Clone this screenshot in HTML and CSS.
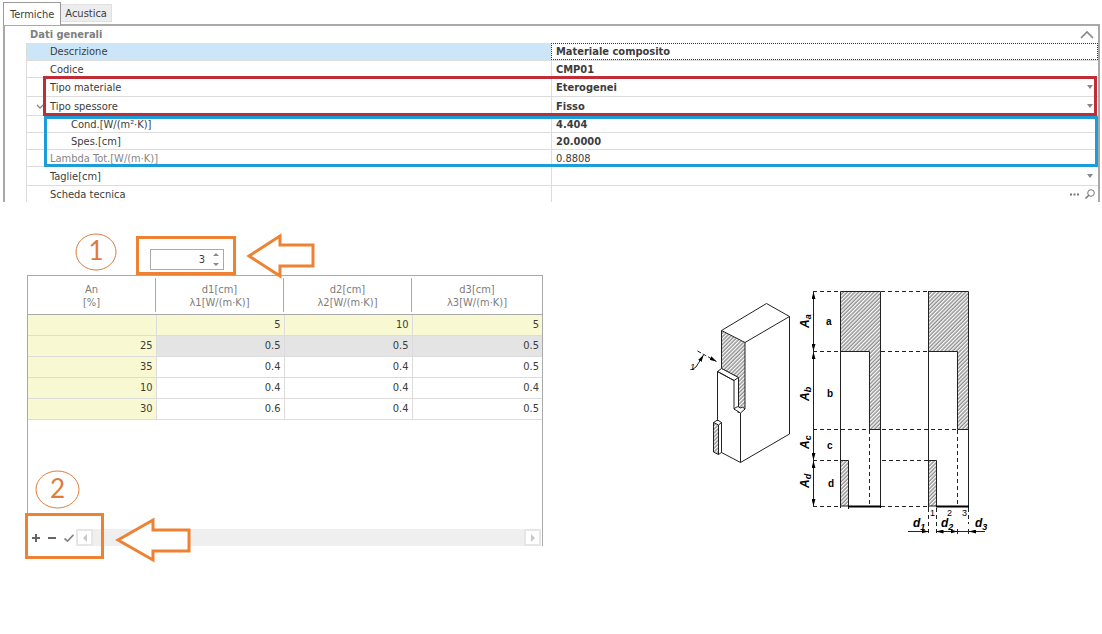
FILE: index.html
```html
<!DOCTYPE html>
<html lang="it">
<head>
<meta charset="utf-8">
<title>Materiale composito</title>
<link rel="stylesheet" href="styles.css">
</head>
<body>
<nav class="tabs" role="tablist">
  <button class="tab tab-active" type="button" role="tab" aria-selected="true">Termiche</button>
  <button class="tab" type="button" role="tab" aria-selected="false">Acustica</button>
</nav>
<form class="panel">
  <div class="group-head">
    <h2 class="group-title">Dati generali</h2>
    <button class="icon-btn collapse" type="button" aria-label="Comprimi"><svg width="14" height="9" viewBox="0 0 14 9"><path d="M1 8 7 2l6 6" fill="none" stroke="#888" stroke-width="1.6"/></svg></button>
  </div>
  <div class="props">
    <div class="row row-selected"><label class="name" for="descr">Descrizione</label><div class="value"><input class="field strong" id="descr" value="Materiale composito"></div></div>
    <div class="row"><label class="name" for="codice">Codice</label><div class="value"><input class="field strong" id="codice" value="CMP01"></div></div>
    <div class="marked marked-red">
      <div class="row row-tall"><label class="name" for="tipom">Tipo materiale</label><div class="value"><select class="field strong" id="tipom"><option>Eterogenei</option></select><svg class="caret" width="6" height="4"><path d="M0 0h6L3 4z"/></svg></div></div>
      <div class="row row-tall"><label class="name name-open" for="tipos"><svg class="chev" width="8" height="5"><path d="M1 1l3 3 3-3" fill="none" stroke="#888" stroke-width="1.3"/></svg>Tipo spessore</label><div class="value"><select class="field strong" id="tipos"><option>Fisso</option></select><svg class="caret" width="6" height="4"><path d="M0 0h6L3 4z"/></svg></div></div>
    </div>
    <div class="marked marked-blue">
      <div class="row"><label class="name name-sub" for="cond">Cond.[W/(m²·K)]</label><div class="value"><input class="field strong" id="cond" value="4.404"></div></div>
      <div class="row"><label class="name name-sub" for="spes">Spes.[cm]</label><div class="value"><input class="field strong" id="spes" value="20.0000"></div></div>
      <div class="row"><label class="name name-muted" for="lambda">Lambda Tot.[W/(m·K)]</label><div class="value"><input class="field" id="lambda" value="0.8808" readonly></div></div>
    </div>
    <div class="row row-tall"><label class="name" for="taglie">Taglie[cm]</label><div class="value"><select class="field" id="taglie"><option></option></select><svg class="caret" width="6" height="4"><path d="M0 0h6L3 4z"/></svg></div></div>
    <div class="row"><label class="name" for="scheda">Scheda tecnica</label><div class="value"><input class="field" id="scheda">
      <button class="icon-btn" type="button" aria-label="Sfoglia"><svg width="9" height="3"><path d="M0 .5h2v2H0zM3.500 .5h2v2h-2zM7 .5h2v2H7z" fill="#777"/></svg></button>
      <button class="icon-btn" type="button" aria-label="Cerca"><svg width="10" height="10"><circle cx="6" cy="4" r="3.300" fill="none" stroke="#777"/><path d="M4 6 .5 9.500" stroke="#777" stroke-width="1.5"/></svg></button></div></div>
  </div>
</form>

<main class="work">
  <section class="layers">
    <div class="count-bar">
      <div class="step"><svg class="step-ring" viewBox="0 0 42 38" preserveAspectRatio="none"><ellipse cx="21" cy="19" rx="20" ry="18"/></svg><span>1</span></div>
      <div class="count-box">
        <div class="spin"><input class="spin-input" type="number" value="3" aria-label="Numero strati"><svg class="spin-arrows" width="6" height="13"><path d="M0 3 3 0l3 3zM0 10h6l-3 3z"/></svg></div>
      </div>
      <svg class="arrow" width="70" height="46" viewBox="0 0 70 46"><path d="M3 23 34 3v9h33v21H34v10z"/></svg>
    </div>
    <div class="grid-box">
      <table class="grid">
        <colgroup><col class="col"><col class="col"><col class="col"><col></colgroup>
        <thead><tr><th><span>An<br>[%]</span></th><th><span>d1[cm]<br>λ1[W/(m·K)]</span></th><th><span>d2[cm]<br>λ2[W/(m·K)]</span></th><th><span>d3[cm]<br>λ3[W/(m·K)]</span></th></tr></thead>
        <tbody>
          <tr class="thickness"><td></td><td>5</td><td>10</td><td>5</td></tr>
          <tr class="current"><td>25</td><td>0.5</td><td>0.5</td><td>0.5</td></tr>
          <tr><td>35</td><td>0.4</td><td>0.4</td><td>0.5</td></tr>
          <tr><td>10</td><td>0.4</td><td>0.4</td><td>0.4</td></tr>
          <tr><td>30</td><td>0.6</td><td>0.4</td><td>0.5</td></tr>
        </tbody>
      </table>
      <div class="grid-foot">
        <button class="icon-btn" type="button" aria-label="Aggiungi"><svg width="8" height="8"><path d="M4 0v8M0 4h8" stroke="#666" stroke-width="2"/></svg></button>
        <button class="icon-btn" type="button" aria-label="Rimuovi"><svg width="8" height="8"><path d="M0 4h8" stroke="#666" stroke-width="2"/></svg></button>
        <button class="icon-btn" type="button" aria-label="Conferma"><svg width="10" height="8"><path d="M.5 4.500 3.500 7.200 9.500 .8" fill="none" stroke="#888" stroke-width="1.7"/></svg></button>
        <div class="scroll">
          <button class="scroll-btn" type="button" aria-label="Scorri a sinistra"><svg width="4" height="8"><path d="M4 0v8L0 4z"/></svg></button>
          <button class="scroll-btn" type="button" aria-label="Scorri a destra"><svg width="4" height="8"><path d="M0 0v8l4-4z"/></svg></button>
        </div>
      </div>
      <div class="step step-two"><svg class="step-ring" viewBox="0 0 45 39" preserveAspectRatio="none"><ellipse cx="22.500" cy="19.500" rx="21.500" ry="18.500"/></svg><span>2</span></div>
      <div class="foot-mark"></div>
      <svg class="arrow arrow-two" width="76" height="46" viewBox="0 0 76 46"><path d="M3 23 38 3v10h36v21H38v9z"/></svg>
    </div>
  </section>

  <figure class="figure">
    <svg class="drawing" width="310" height="255" viewBox="685 285 310 255" role="img" aria-label="Sezione del materiale">
      <defs>
        <pattern id="hatch" width="2.700" height="2.700" patternUnits="userSpaceOnUse" patternTransform="rotate(45)"><path d="M1 0v2.700" stroke="#333" stroke-width=".8"/></pattern>
        <marker id="tip" viewBox="0 0 7 4" refX="7" refY="2" markerWidth="7" markerHeight="4" orient="auto-start-reverse"><path d="M0 0 7 2 0 4z"/></marker>
      </defs>
      <g class="thin">
        <path class="hatched" d="M721.500 330.500 745 342.500V409l-7 3.500V377.500l-16.500-9z"/>
        <path d="M721.500 330.500 766.500 303.500 789.500 316.500V434L740.500 462.500V413M745 342.500 789.500 316.500"/>
        <path class="blank" d="M717.500 371.500l4-3 17 9V408l-4.500 1V380.500z"/>
        <path d="M717.500 421V371.500l16.500 9 4.500-3"/>
        <path class="blank" d="M734 409q4-4 6-1 3-2 5 1l-4.500 4z"/>
        <path class="hatched" d="M713.500 422.500l5 2.500v29.500l-5-2.500z"/>
        <path d="M713.500 422.500l4-2.500 4 2.500-3 2.500M721.500 422.500v30l-3 2M721.500 452.500l19 10"/>
        <path d="M697.500 351 716.500 361.500" stroke-dasharray="4 2" marker-end="url(#tip)"/>
        <path d="M693 369 696 367 703.500 355" marker-end="url(#tip)"/>
      </g>
      <text class="small" x="690" y="370" font-style="italic">1</text>

      <g class="thin">
        <path class="hatched" d="M840.500 291.500h40v138h-11V351.500h-29z"/>
        <path class="hatched" d="M840.500 460.500h8v45.500h-8z"/>
        <path d="M840.500 351v157M880.500 429v79M848.500 506v3"/>
        <path class="hatched" d="M928.500 291.500h40v138h-11V351.500h-29z"/>
        <path class="hatched" d="M928.500 460.500h8v45.500h-8z"/>
        <path d="M928.500 291v217M968.500 429v79"/>
        <path class="thick" d="M848 506.500h33M936 506.500h33"/>
        <path class="dash" d="M813 291.500h27M881 291.500h47M813 351.500h27M881 351.500h47M813 429.500h57M882 429.500h76M813 460.500h27M882 460.500h46M813 506.500h27M881 506.500h47M869.500 430v76M957.500 430v76M928.500 508v25M936.500 508v25M968.500 508v16"/>
        <path d="M813.500 292v59" marker-start="url(#tip)" marker-end="url(#tip)"/>
        <path d="M813.500 352v108" marker-start="url(#tip)" marker-end="url(#tip)"/>
        <path d="M813.500 461v45" marker-start="url(#tip)" marker-end="url(#tip)"/>
        <path d="M908 531.500h20.500" marker-end="url(#tip)"/>
        <path d="M936.500 531.500h21" marker-start="url(#tip)" marker-end="url(#tip)"/>
        <path d="M969 531.500h16" marker-start="url(#tip)"/>
        <path d="M957 531.500h12M957.500 529v5M968.500 529v5"/>
      </g>
      <g class="dim">
        <text transform="translate(809 328) rotate(-90)">A<tspan class="sub" dy="2">a</tspan></text>
        <text transform="translate(809 401) rotate(-90)">A<tspan class="sub" dy="2">b</tspan></text>
        <text transform="translate(809 449) rotate(-90)">A<tspan class="sub" dy="2">c</tspan></text>
        <text transform="translate(809 488) rotate(-90)">A<tspan class="sub" dy="2">d</tspan></text>
        <text x="913" y="527">d<tspan class="sub" dy="3">1</tspan></text>
        <text x="941" y="527">d<tspan class="sub" dy="3">2</tspan></text>
        <text x="975" y="527">d<tspan class="sub" dy="3">3</tspan></text>
      </g>
      <g class="zone"><text x="826" y="325">a</text><text x="827" y="397">b</text><text x="827" y="449">c</text><text x="828" y="487">d</text></g>
      <g class="small"><text x="930" y="516">1</text><text x="947" y="516">2</text><text x="962" y="516">3</text></g>
    </svg>
  </figure>
</main>
</body>
</html>
```

FILE: styles.css
```css
* { box-sizing: border-box; }

body {
  min-height: 100vh;
  margin: 0;
  padding: 2px 2px 24px 3px;
  background: #fff;
  color: #3c3c3c;
  font: 11px/13px "DejaVu Sans Condensed", "DejaVu Sans", sans-serif;
}

button, input, select { font: inherit; color: inherit; }

/* Tabs */
.tabs { display: flex; align-items: flex-start; height: 22px; }
.tab {
  height: 18px;
  margin-top: 2px;
  padding: 0 4px;
  border: 1px solid #e0e0e0;
  border-left: 0;
  background: #ededed;
}
.tab-active {
  position: relative;
  height: 23px;
  margin-top: 0;
  padding: 0 6px;
  border: 1px solid #999;
  border-bottom: 0;
  background: #fff;
}

/* Property panel */
.panel { border: 2px solid #a9a9a9; border-bottom: 0; }
.group-head {
  display: flex;
  align-items: center;
  justify-content: space-between;
  height: 17px;
  padding: 0 4px 0 25px;
}
.group-title { margin: 0; font-size: 11px; font-weight: bold; color: #808080; }
.icon-btn { display: flex; padding: 0; border: 0; background: none; }

.props { margin-left: 21px; border-left: 1px solid #dcdcdc; }
.row {
  display: grid;
  grid-template-columns: 524fr 547fr;
  height: 17px;
  border-bottom: 1px solid #dcdcdc;
}
.row-tall { height: 19px; }
.row-selected { height: 18px; }
.row-selected .name { background: #cde6f7; }
.row-selected .value { border: 1px dotted #333; }
.props > .row:last-child { height: 16px; border-bottom: 0; }
.name { display: flex; align-items: center; padding-left: 23px; white-space: nowrap; }
.name-open { gap: 6px; padding-left: 9px; }
.name-sub { padding-left: 44px; }
.name-muted { color: #868686; }
.value {
  display: flex;
  align-items: center;
  gap: 6px;
  min-width: 0;
  padding: 0 3px 0 4px;
  border-left: 1px solid #dcdcdc;
}
.field {
  flex: 1;
  min-width: 0;
  height: 13px;
  padding: 0;
  border: 0;
  outline: 0;
  background: none;
  appearance: none;
}
.strong { font-weight: bold; }
.caret { margin-right: 2px; fill: #888; pointer-events: none; }

.marked { position: relative; }
.marked::after { content: ""; position: absolute; pointer-events: none; }
.marked-red::after { inset: -2px 1px 0 16px; border: 3px solid #bf2e36; }
.marked-blue::after { z-index: 1; inset: 0 0 0 17px; border: 3px solid #1c9cd8; }

/* Lower area */
.work {
  display: grid;
  grid-template-columns: 516fr 557fr;
  padding: 31px 0 0 24px;
}
.count-bar { display: flex; align-items: flex-start; height: 42px; padding-left: 48px; }
.step {
  position: relative;
  display: flex;
  align-items: center;
  justify-content: center;
  width: 42px;
  height: 38px;
  padding-bottom: 4px;
  color: #de7b3c;
  font: 26px/34px Lato, sans-serif;
}
.step-ring { position: absolute; inset: 0; width: 100%; height: 100%; fill: none; stroke: #de7b3c; }
.count-box {
  width: 100px;
  height: 39px;
  margin: 3px 10px 0 19px;
  padding: 10px 9px 0 11px;
  border: 3px solid #ef8133;
}
.spin { display: flex; align-items: center; height: 21px; padding-right: 4px; border: 1px solid #a9a9a9; }
.spin-input {
  flex: 1;
  min-width: 0;
  padding: 0 8px 0 0;
  border: 0;
  outline: 0;
  background: none;
  text-align: right;
  appearance: textfield;
}
.spin-input::-webkit-inner-spin-button { appearance: none; margin: 0; }
.spin-arrows { fill: #888; }
.arrow { position: relative; z-index: 1; flex: none; fill: #fff; stroke: #ef8133; stroke-width: 3; }

.grid-box {
  position: relative;
  display: flex;
  flex-direction: column;
  min-height: 271px;
  border: 1px solid #a9a9a9;
  border-bottom: 0;
}
.grid { width: 100%; border-collapse: collapse; table-layout: fixed; }
.col { width: 128px; }
.grid th {
  height: 38px;
  padding: 2px 0 1px;
  border-bottom: 1px solid #a9a9a9;
  color: #7c7c7c;
  font-weight: normal;
}
.grid th span { display: block; padding: 5px 0 3px; border-right: 1px solid #a9a9a9; }
.grid th:last-child span { border-right: 0; }
.grid td {
  height: 21px;
  padding: 0 3px;
  border-right: 1px solid #dcdcdc;
  border-bottom: 1px solid #dcdcdc;
  text-align: right;
}
.grid td:last-child { border-right: 0; }
.grid .current td { background: #e4e4e4; }
.grid .thickness td, .grid td:first-child { background: #f8f8d2; }

.grid-foot { display: flex; align-items: center; gap: 8px; height: 17px; margin-top: auto; padding-left: 4px; }
.scroll {
  display: flex;
  flex: 1;
  justify-content: space-between;
  height: 17px;
  margin: 0 1px 0 -6px;
  background: #efefef;
}
.scroll-btn {
  display: flex;
  align-items: center;
  justify-content: center;
  width: 17px;
  padding: 0;
  border: 2px solid #e6e6e6;
  background: #fff;
  fill: #c8c8c8;
}

/* Call-outs lying over the grid */
.step-two { position: absolute; left: 7px; bottom: 37px; width: 45px; height: 39px; }
.foot-mark { position: absolute; left: -3px; bottom: -13px; width: 79px; height: 46px; border: 3px solid #ef8133; }
.arrow-two { position: absolute; left: 87px; bottom: -17px; }

/* Drawing */
.figure { margin: 52px 0 0 142px; }
.drawing { display: block; max-width: 100%; font-family: "Liberation Sans", Arial, sans-serif; }
.thin { fill: none; stroke: #222; }
.thin .hatched { fill: url(#hatch); }
.blank { fill: #fff; }
.thick { stroke: #000; stroke-width: 2; }
.dash { stroke-dasharray: 4 3; }
.dim { font-size: 12px; font-weight: bold; font-style: italic; }
.sub { font-size: 9px; }
.zone { font-size: 10px; font-weight: bold; }
.small { font-size: 9px; }
```
